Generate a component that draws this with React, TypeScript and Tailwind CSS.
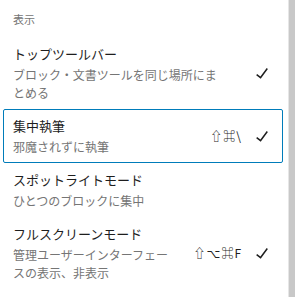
import React from "react";

const JP = '"Noto Sans CJK JP", "Noto Sans", sans-serif';

function Check() {
  return (
    <svg width="24" height="24" viewBox="0 0 24 24" className="shrink-0">
      <path d="M16.7 7.1l-6.3 8.5-3.3-2.5-.9 1.2 4.5 3.4L17.9 8z" fill="#1e1e1e" />
    </svg>
  );
}

type Item = { title: string; desc: string; shortcut?: string; focused?: boolean; checked?: boolean };

const items: Item[] = [
  { title: "トップツールバー", desc: "ブロック・文書ツールを同じ場所にまとめる", checked: true },
  { title: "集中執筆", desc: "邪魔されずに執筆", shortcut: "⇧⌘\\", focused: true, checked: true },
  { title: "スポットライトモード", desc: "ひとつのブロックに集中" },
  { title: "フルスクリーンモード", desc: "管理ユーザーインターフェースの表示、非表示", shortcut: "⇧⌥⌘F", checked: true },
];

export default function App() {
  return (
    <div className="flex h-[297px] w-[295px] bg-white overflow-hidden" style={{ fontFamily: JP }}>
      <div className="flex-1 flex flex-col pl-[3px] pr-[5px]">
        <div className="pl-[10px] pt-[11px] pb-[10px] text-[11px] leading-[16px] text-[#757575]">表示</div>
        {items.map((it) => (
          <div
            key={it.title}
            className={
              "flex items-center pl-[9px] pr-[8px] py-[6px] rounded-[2px] border-[1.5px] " +
              (it.focused ? "border-[#007cba]" : "border-transparent")
            }
          >
            <div className="flex-1 min-w-0 pr-[23px]">
              <div className="text-[13px] leading-[20px] text-[#1e1e1e]">{it.title}</div>
              <div className="mt-[2px] text-[12px] leading-[18px] text-[#757575]">{it.desc}</div>
            </div>
            {it.shortcut && (
              <div
                className="text-[12px] text-[#1e1e1e] mr-[8px] tracking-[1px] whitespace-nowrap"
                style={{ fontFamily: '"Noto Sans CJK JP", "DejaVu Sans", sans-serif' }}
              >
                {it.shortcut}
              </div>
            )}
            {it.checked ? <Check /> : <div className="w-[24px] h-[24px] shrink-0" />}
          </div>
        ))}
      </div>
      <div className="w-[7px] bg-[#c8c8c8] border-l border-[#e6e6e6]" />
    </div>
  );
}
